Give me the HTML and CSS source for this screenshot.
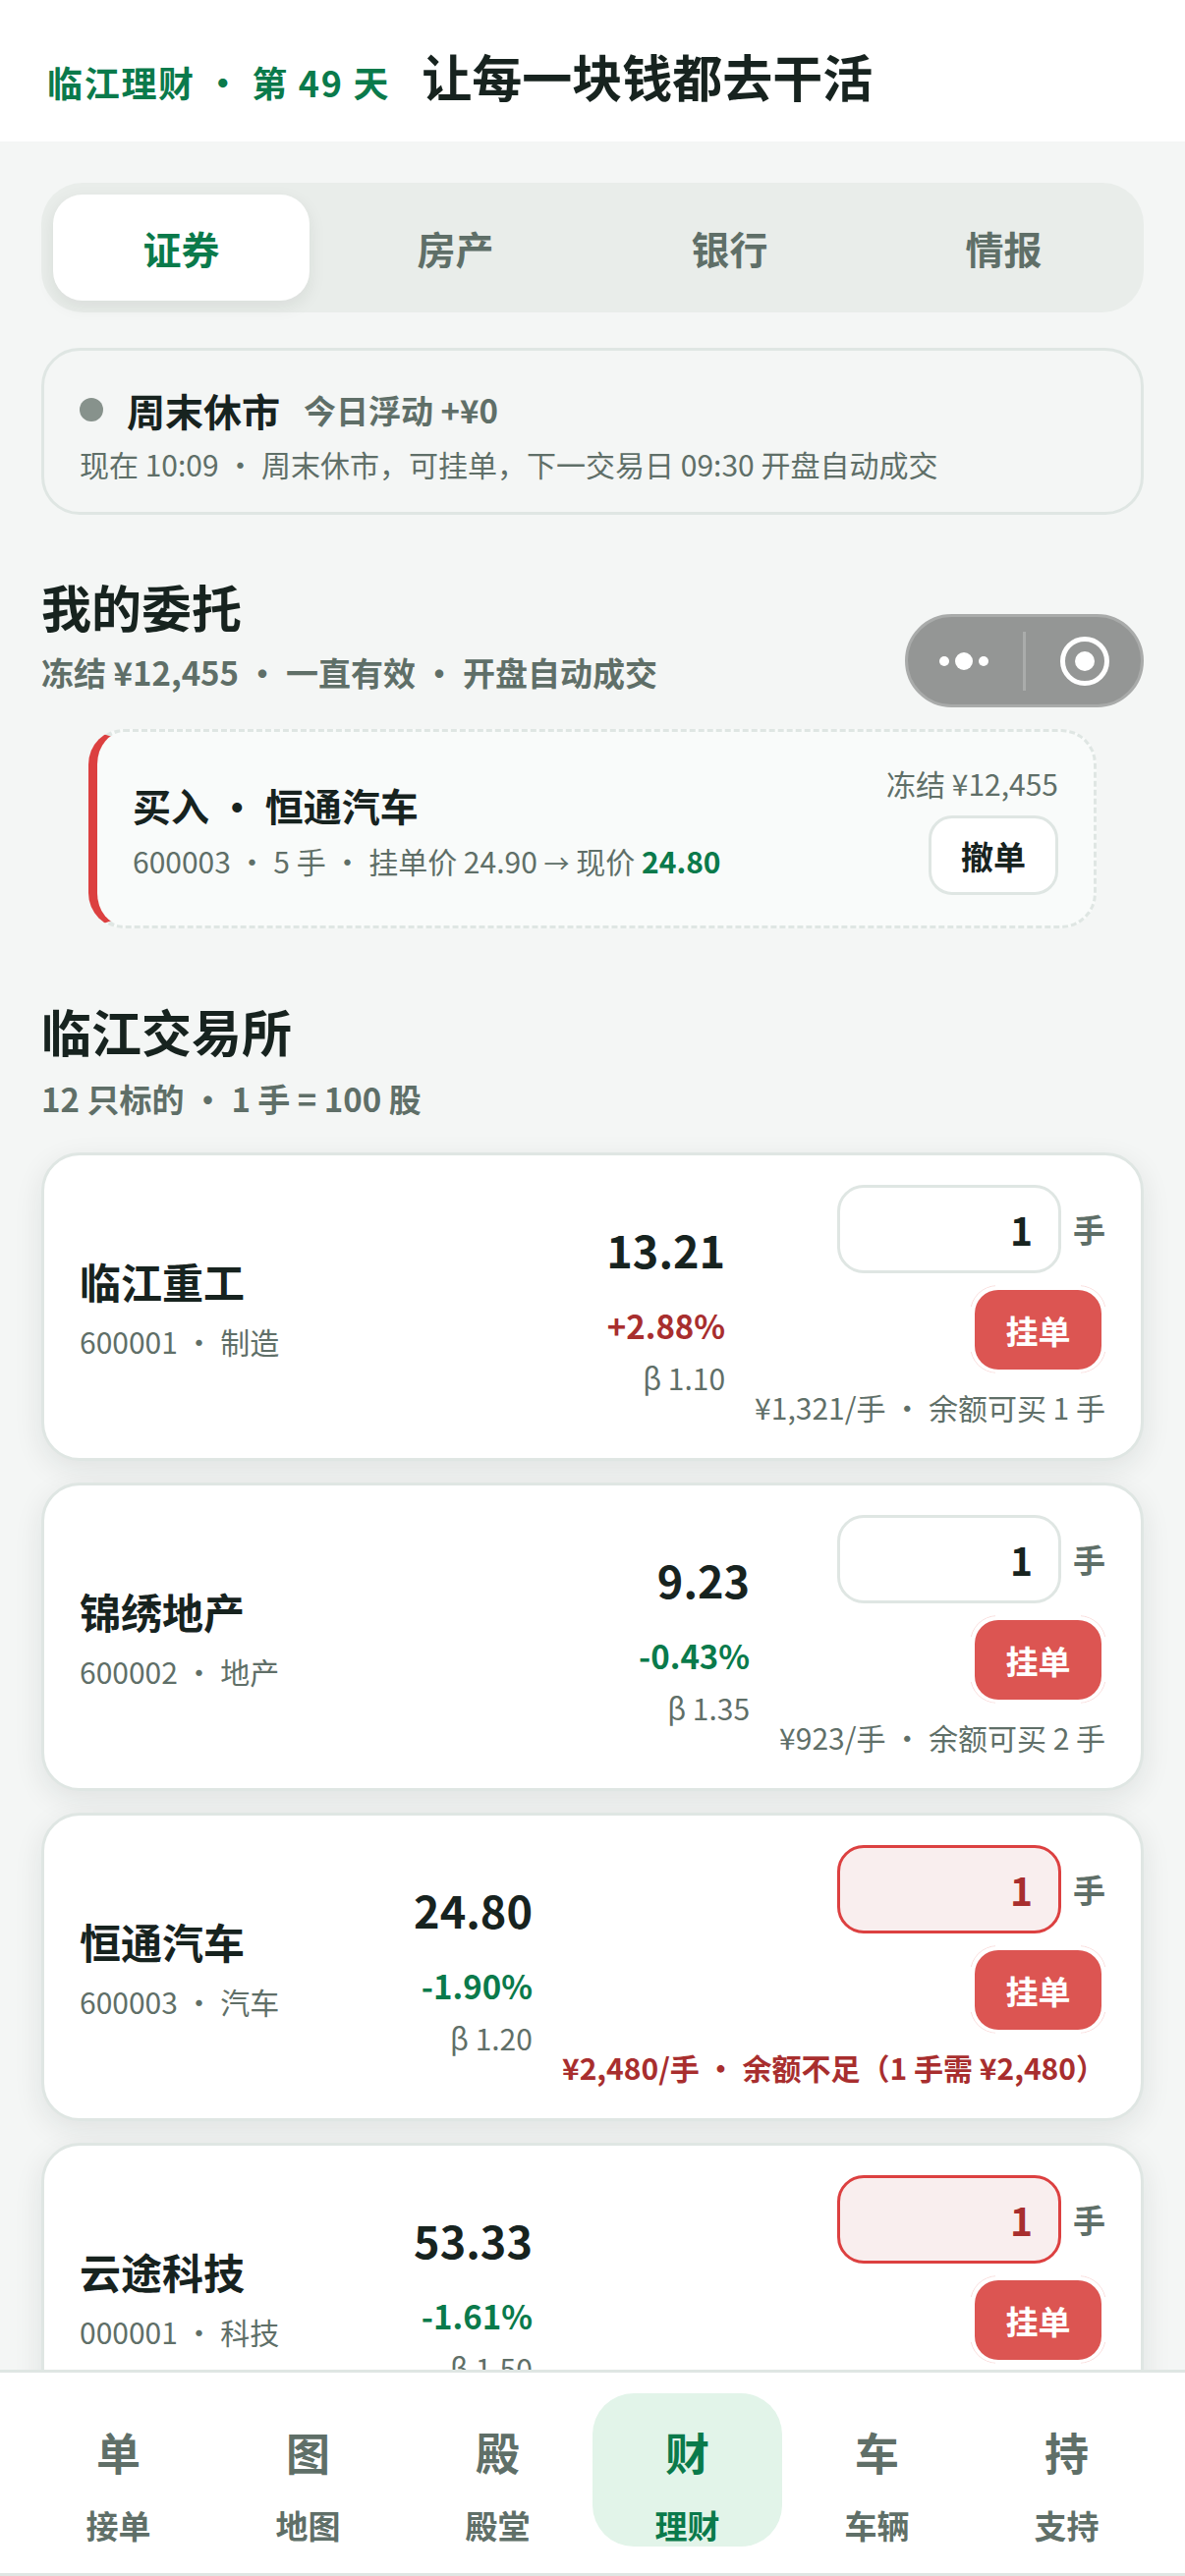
FILE: index.html
```html
<!DOCTYPE html>
<html lang="zh-CN">
<head>
    <meta charset="UTF-8">
    <meta name="viewport" content="width=device-width, initial-scale=1.0">
    <title>临江理财</title>
    <link rel="stylesheet" href="styles.css">
</head>
<body>
    <header class="top-bar">
        <span class="kicker">临江理财 · 第 49 天</span>
        <h1 class="top-title">让每一块钱都去干活</h1>
    </header>

    <main class="page">
        <nav class="segment">
            <div class="segment-item active">证券</div>
            <div class="segment-item">房产</div>
            <div class="segment-item">银行</div>
            <div class="segment-item">情报</div>
        </nav>

        <section class="status-card">
            <div class="status-line">
                <span class="status-dot"></span>
                <span class="status-title">周末休市</span>
                <span class="status-float">今日浮动 +¥0</span>
            </div>
            <div class="status-sub">现在 10:09 · 周末休市，可挂单，下一交易日 09:30 开盘自动成交</div>
        </section>

        <h2 class="section-title orders-title">我的委托</h2>
        <div class="section-sub">冻结 ¥12,455 · 一直有效 · 开盘自动成交</div>

        <div class="order-card">
            <div class="order-main">
                <div class="order-title">买入 · 恒通汽车</div>
                <div class="order-sub">600003 · 5 手 · 挂单价 24.90 <span class="arrow">→</span> 现价 <b class="down">24.80</b></div>
            </div>
            <div class="order-side">
                <div class="order-frozen">冻结 ¥12,455</div>
                <button class="cancel-btn">撤单</button>
            </div>
        </div>

        <h2 class="section-title market-title">临江交易所</h2>
        <div class="section-sub market-sub">12 只标的 · 1 手 = 100 股</div>

        <div class="stock-list">
            <div class="stock-card">
                <div class="stock-info">
                    <div class="stock-name">临江重工</div>
                    <div class="stock-code">600001 · 制造</div>
                </div>
                <div class="stock-price">
                    <div class="price">13.21</div>
                    <div class="pct up">+2.88%</div>
                    <div class="beta">β 1.10</div>
                </div>
                <div class="stock-trade">
                    <div class="qty-row"><input class="qty" type="text" value="1"><span class="qty-unit">手</span></div>
                    <button class="order-btn">挂单</button>
                    <div class="trade-hint">¥1,321/手 · 余额可买 1 手</div>
                </div>
            </div>

            <div class="stock-card">
                <div class="stock-info">
                    <div class="stock-name">锦绣地产</div>
                    <div class="stock-code">600002 · 地产</div>
                </div>
                <div class="stock-price">
                    <div class="price">9.23</div>
                    <div class="pct down">-0.43%</div>
                    <div class="beta">β 1.35</div>
                </div>
                <div class="stock-trade">
                    <div class="qty-row"><input class="qty" type="text" value="1"><span class="qty-unit">手</span></div>
                    <button class="order-btn">挂单</button>
                    <div class="trade-hint">¥923/手 · 余额可买 2 手</div>
                </div>
            </div>

            <div class="stock-card">
                <div class="stock-info">
                    <div class="stock-name">恒通汽车</div>
                    <div class="stock-code">600003 · 汽车</div>
                </div>
                <div class="stock-price">
                    <div class="price">24.80</div>
                    <div class="pct down">-1.90%</div>
                    <div class="beta">β 1.20</div>
                </div>
                <div class="stock-trade">
                    <div class="qty-row"><input class="qty qty-error" type="text" value="1"><span class="qty-unit">手</span></div>
                    <button class="order-btn">挂单</button>
                    <div class="trade-hint hint-error">¥2,480/手 · 余额不足（1 手需 ¥2,480）</div>
                </div>
            </div>

            <div class="stock-card">
                <div class="stock-info">
                    <div class="stock-name">云途科技</div>
                    <div class="stock-code">000001 · 科技</div>
                </div>
                <div class="stock-price">
                    <div class="price">53.33</div>
                    <div class="pct down">-1.61%</div>
                    <div class="beta">β 1.50</div>
                </div>
                <div class="stock-trade">
                    <div class="qty-row"><input class="qty qty-error" type="text" value="1"><span class="qty-unit">手</span></div>
                    <button class="order-btn">挂单</button>
                    <div class="trade-hint hint-error">¥5,333/手 · 余额不足（1 手需 ¥5,333）</div>
                </div>
            </div>
        </div>
    </main>

    <nav class="tab-bar">
        <div class="tab-item"><span class="tab-icon">单</span><span class="tab-label">接单</span></div>
        <div class="tab-item"><span class="tab-icon">图</span><span class="tab-label">地图</span></div>
        <div class="tab-item"><span class="tab-icon">殿</span><span class="tab-label">殿堂</span></div>
        <div class="tab-item active"><span class="tab-icon">财</span><span class="tab-label">理财</span></div>
        <div class="tab-item"><span class="tab-icon">车</span><span class="tab-label">车辆</span></div>
        <div class="tab-item"><span class="tab-icon">持</span><span class="tab-label">支持</span></div>
    </nav>

    <div class="capsule">
        <svg class="capsule-more" viewBox="0 0 50 20" width="50" height="20" fill="#fff">
            <circle cx="5" cy="10" r="5"/>
            <circle cx="25" cy="10" r="9"/>
            <circle cx="45" cy="10" r="5"/>
        </svg>
        <span class="capsule-line"></span>
        <svg class="capsule-close" viewBox="0 0 50 50" width="50" height="50">
            <circle cx="25" cy="25" r="22.5" fill="none" stroke="#fff" stroke-width="5"/>
            <circle cx="25" cy="25" r="10" fill="#fff"/>
        </svg>
    </div>
</body>
</html>
```

FILE: styles.css
```css
* {
    margin: 0;
    padding: 0;
    box-sizing: border-box;
}

html, body {
    width: 100%;
    height: 100%;
    overflow: hidden;
}

body {
    display: flex;
    flex-direction: column;
    position: relative;
    background: #f4f6f5;
    color: #17231f;
    font-family: "Noto Sans CJK SC", "Noto Sans", sans-serif;
}

.top-bar {
    display: flex;
    align-items: baseline;
    gap: 32px;
    height: 144px;
    padding: 41px 48px 0;
    background: #fff;
}

.kicker {
    color: #0a7a4b;
    font-size: 36px;
    font-weight: 700;
    letter-spacing: 1.7px;
}

.top-title {
    font-size: 51px;
    line-height: 72px;
    font-weight: 700;
}

.page {
    flex: 1;
    min-height: 0;
    overflow: hidden;
    padding: 42px 42px 0;
}

.segment {
    display: grid;
    grid-template-columns: repeat(4, 1fr);
    gap: 18px;
    height: 132px;
    padding: 12px;
    border-radius: 42px;
    background: #e9edea;
}

.segment-item {
    display: flex;
    align-items: center;
    justify-content: center;
    border-radius: 30px;
    color: #5f6f68;
    font-size: 39px;
    font-weight: 700;
}

.segment-item.active {
    background: #fff;
    color: #0a7a4b;
    box-shadow: 0 6px 18px rgba(23, 35, 31, 0.08);
}

.status-card {
    height: 170px;
    margin-top: 36px;
    padding: 33px 36px 0;
    border: 3px solid #dfe6e3;
    border-radius: 39px;
}

.status-line {
    display: flex;
    align-items: center;
    height: 54px;
}

.status-dot {
    width: 24px;
    height: 24px;
    margin-right: 24px;
    border-radius: 50%;
    background: #87928c;
}

.status-title {
    margin-right: 24px;
    font-size: 39px;
    font-weight: 700;
}

.status-float {
    color: #5f6f68;
    font-size: 33px;
    font-weight: 700;
}

.status-sub {
    margin-top: 6px;
    color: #5f6f68;
    font-size: 30px;
    line-height: 45px;
}

.section-title {
    font-size: 51px;
    line-height: 66px;
    font-weight: 700;
}

.orders-title {
    margin-top: 60px;
}

.market-title {
    margin-top: 71px;
}

.section-sub {
    margin-top: 12px;
    color: #5f6f68;
    font-size: 33px;
    line-height: 45px;
    font-weight: 700;
}

.market-sub {
    margin-top: 14px;
}

.order-card {
    display: flex;
    align-items: center;
    justify-content: space-between;
    height: 203px;
    margin: 35px 48px 0;
    padding: 0 36px;
    border: 3px dashed #dfe6e3;
    border-left: 9px solid #dc4040;
    border-radius: 36px;
    background: #f9fbfa;
}

.order-main {
    padding-top: 4px;
}

.order-title {
    font-size: 39px;
    line-height: 54px;
    font-weight: 700;
}

.order-sub {
    margin-top: 8px;
    color: #5f6f68;
    font-size: 30px;
    line-height: 45px;
}

.arrow {
    font-size: 26px;
}

.order-side {
    display: flex;
    flex-direction: column;
    align-items: flex-end;
    gap: 12px;
}

.order-frozen {
    color: #5f6f68;
    font-size: 30px;
    line-height: 42px;
}

.cancel-btn {
    width: 132px;
    height: 81px;
    border: 3px solid #dfe6e3;
    border-radius: 24px;
    background: #fff;
    color: #17231f;
    font-family: inherit;
    font-size: 33px;
    font-weight: 700;
}

.stock-list {
    display: flex;
    flex-direction: column;
    gap: 22px;
    margin-top: 32px;
}

.stock-card {
    display: flex;
    align-items: center;
    gap: 30px;
    padding: 30px 36px 29px;
    border: 3px solid #dfe6e3;
    border-radius: 39px;
    background: #fff;
    box-shadow: 0 9px 30px rgba(23, 35, 31, 0.09);
}

.stock-info {
    flex: 1;
    min-width: 0;
    padding-top: 4px;
}

.stock-name {
    font-size: 42px;
    line-height: 54px;
    font-weight: 700;
}

.stock-code {
    margin-top: 12px;
    color: #5f6f68;
    font-size: 30px;
    line-height: 45px;
}

.stock-price {
    padding-top: 2px;
    text-align: right;
}

.price {
    font-size: 45px;
    line-height: 66px;
    font-weight: 700;
}

.pct {
    margin-top: 20px;
    font-size: 33px;
    line-height: 48px;
    font-weight: 700;
}

.beta {
    margin-top: 7px;
    color: #5f6f68;
    font-size: 30px;
    line-height: 45px;
}

.up {
    color: #a82e2e;
}

.down {
    color: #0a7a4b;
}

.stock-trade {
    display: flex;
    flex-direction: column;
    align-items: flex-end;
}

.qty-row {
    display: flex;
    align-items: center;
    gap: 12px;
}

.qty {
    width: 228px;
    height: 90px;
    padding: 0 26px;
    border: 3px solid #dfe6e3;
    border-radius: 27px;
    outline: none;
    background: #fff;
    color: #17231f;
    font-family: inherit;
    font-size: 39px;
    font-weight: 700;
    text-align: right;
}

.qty-error {
    border-color: #dc4040;
    background: #f9eeee;
    color: #a82e2e;
}

.qty-unit {
    color: #5f6f68;
    font-size: 33px;
    font-weight: 700;
}

.order-btn {
    position: relative;
    width: 129px;
    height: 81px;
    margin: 17px 4px 0 0;
    border: none;
    border-radius: 24px;
    background: #dc5552;
    color: #fff;
    font-family: inherit;
    font-size: 33px;
    font-weight: 700;
}

/* faint ring of the native button, only visible round the corners */
.order-btn::after {
    content: '';
    position: absolute;
    top: -5px;
    right: -5px;
    bottom: -4px;
    left: -5px;
    border: 1px solid #f9d9d8;
    border-radius: 28px;
    -webkit-mask:
        linear-gradient(#000 0 0) left top / 26px 22px no-repeat,
        linear-gradient(#000 0 0) right top / 26px 22px no-repeat,
        linear-gradient(#000 0 0) left bottom / 26px 22px no-repeat,
        linear-gradient(#000 0 0) right bottom / 26px 22px no-repeat;
}

.trade-hint {
    margin-top: 16px;
    color: #5f6f68;
    font-size: 30px;
    line-height: 45px;
    white-space: nowrap;
}

.hint-error {
    color: #a82e2e;
    font-weight: 700;
}

.tab-bar {
    display: grid;
    grid-template-columns: repeat(6, 1fr);
    flex-shrink: 0;
    height: 210px;
    padding: 21px 24px 27px;
    border-top: 3px solid #dfe6e3;
    border-bottom: 3px solid #dfe6e3;
    background: #fff;
}

.tab-item {
    display: flex;
    flex-direction: column;
    align-items: center;
    padding-top: 30px;
    border-radius: 42px;
    color: #5f6f68;
    font-weight: 700;
}

.tab-item.active {
    background: #e2f4e9;
    color: #0a7a4b;
}

.tab-icon {
    font-size: 45px;
    line-height: 60px;
}

.tab-label {
    margin-top: 22px;
    font-size: 33px;
    line-height: 44px;
}

.capsule {
    position: absolute;
    top: 625px;
    left: 921px;
    display: flex;
    align-items: center;
    width: 243px;
    height: 95px;
    border: 3px solid #a9abaa;
    border-radius: 48px;
    background: #949695;
}

.capsule-more {
    margin-left: 32px;
}

.capsule-line {
    width: 3px;
    height: 60px;
    margin: 0 35px 0 35px;
    background: #aaacab;
}

.capsule-close {
    flex-shrink: 0;
}
```
